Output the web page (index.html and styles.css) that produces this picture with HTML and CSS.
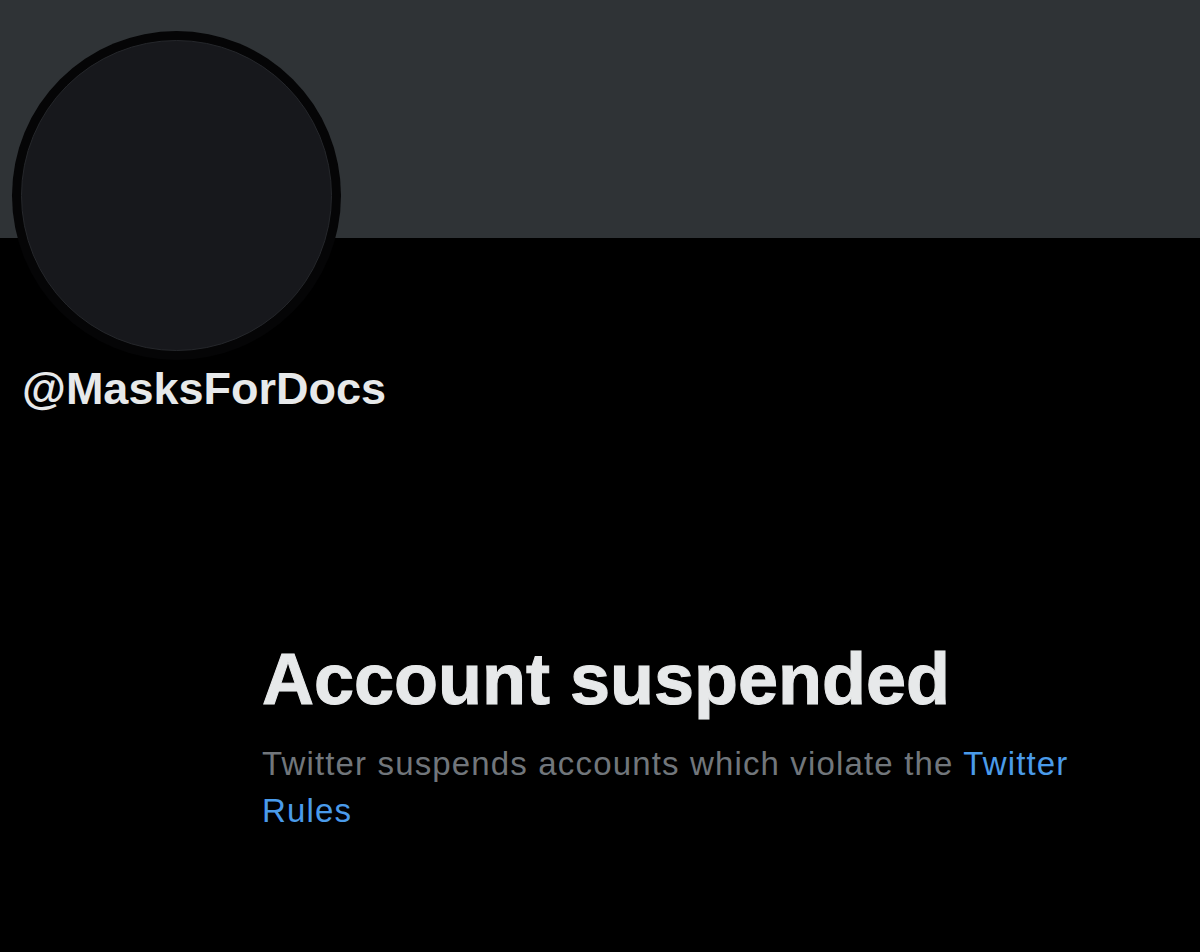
FILE: index.html
```html
<!DOCTYPE html>
<html lang="en">
<head>
<meta charset="utf-8">
<title>@MasksForDocs / Twitter</title>
<link rel="stylesheet" href="styles.css">
</head>
<body>
<div class="page">
  <div class="banner"></div>
  <div class="profile">
    <div class="avatar"><div class="avatar-inner"></div></div>
    <div class="handle">@MasksForDocs</div>
  </div>
  <div class="notice">
    <h1 class="notice-title">Account suspended</h1>
    <p class="notice-text">Twitter suspends accounts which violate the <a class="notice-link" href="#">Twitter Rules</a></p>
  </div>
</div>
</body>
</html>
```
FILE: styles.css
```css
html, body {
  margin: 0;
  padding: 0;
  background: #000;
}
.page {
  width: 1200px;
  height: 952px;
  overflow: hidden;
  background: #000;
  font-family: "Liberation Sans", Arial, sans-serif;
}
.banner {
  height: 238px;
  background: #2f3336;
}
.profile {
  display: flex;
  flex-direction: column;
  align-items: flex-start;
  padding-left: 12px;
  margin-top: -207px;
}
.avatar {
  width: 329px;
  height: 329px;
  box-sizing: border-box;
  border-radius: 50%;
  background: #050506;
  padding: 9px;
}
.avatar-inner {
  width: 100%;
  height: 100%;
  box-sizing: border-box;
  border-radius: 50%;
  background: #17181c;
  border: 1px solid #25272b;
}
.handle {
  margin-top: 2px;
  margin-left: 10px;
  font-size: 45px;
  line-height: 54px;
  font-weight: 700;
  color: #e7e9ea;
}
.notice {
  margin-top: 221px;
  padding-left: 262px;
  max-width: 830px;
}
.notice-title {
  margin: 0;
  font-size: 72px;
  line-height: 85px;
  font-weight: 700;
  color: #e7e9ea;
  -webkit-text-stroke: 1px #e7e9ea;
}
.notice-text {
  margin: 18px 0 0;
  font-size: 33px;
  line-height: 47px;
  color: #71767b;
  letter-spacing: 1.15px;
}
.notice-link {
  color: #4a9bea;
  text-decoration: none;
}
```
